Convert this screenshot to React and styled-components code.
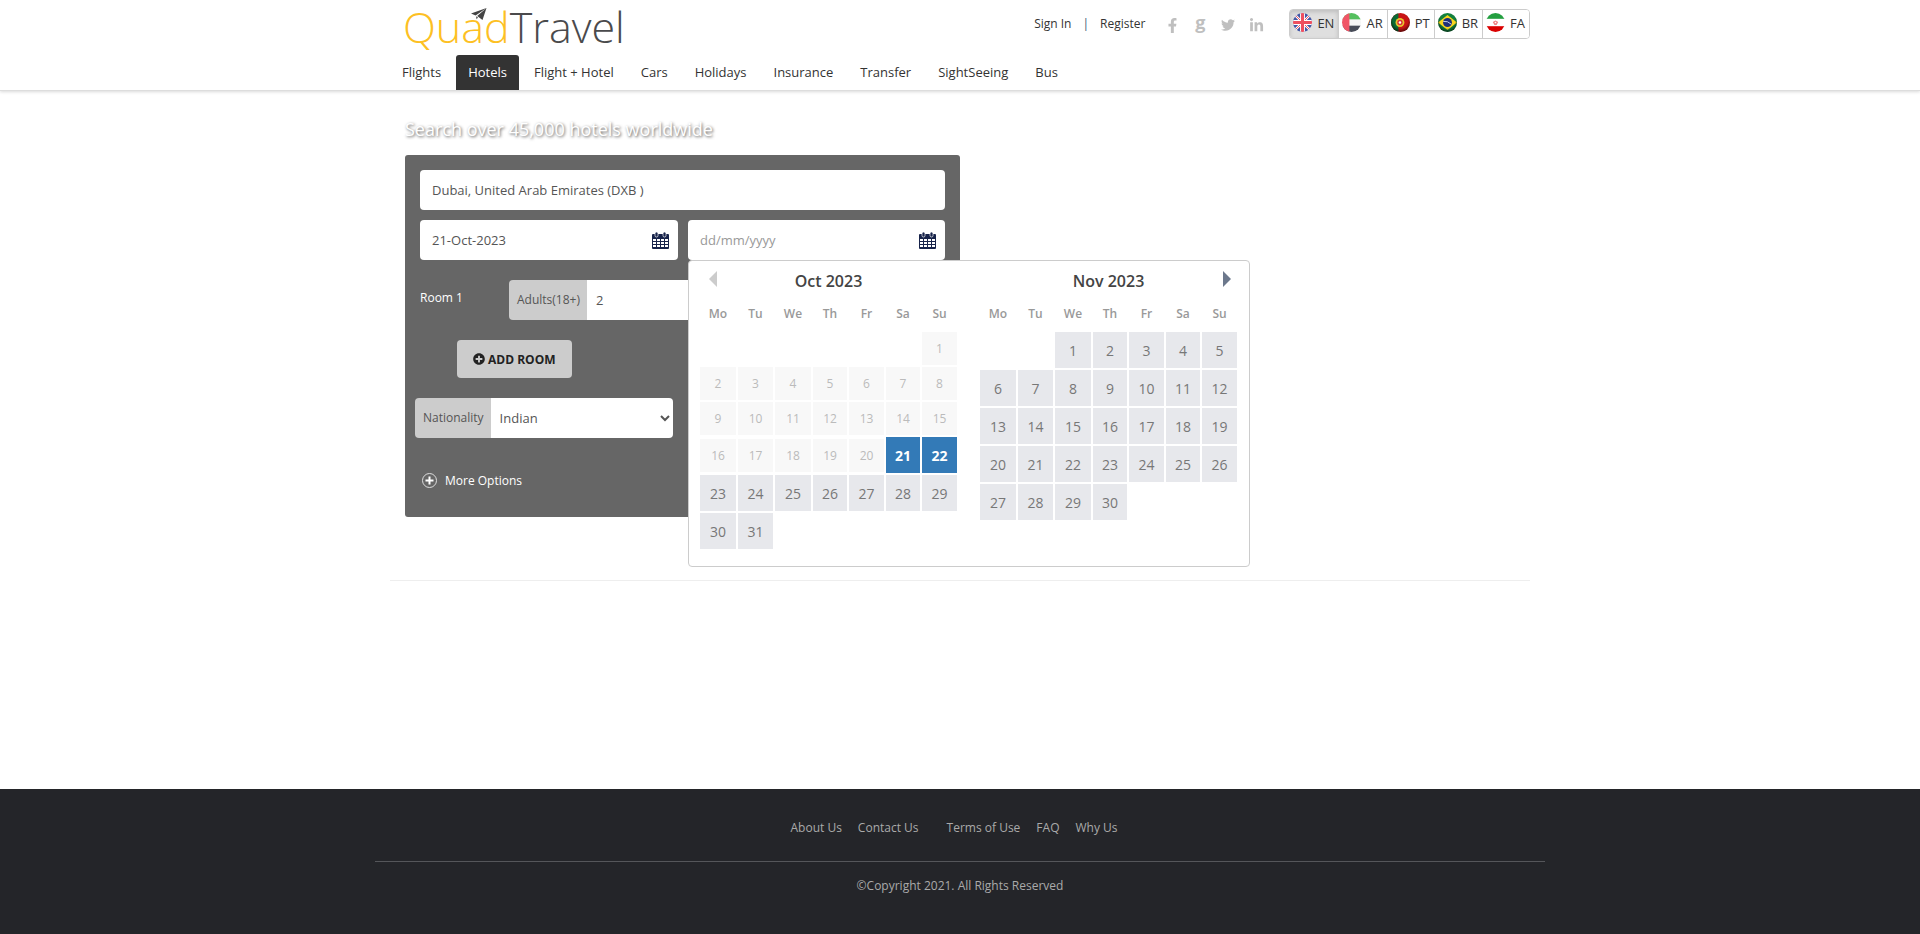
import React, { useState } from 'react';
import styled, { createGlobalStyle, css } from 'styled-components';
import { FaFacebookF, FaTwitter, FaLinkedinIn, FaPlusCircle } from 'react-icons/fa';

const GlobalStyle = createGlobalStyle`
  * { box-sizing: border-box; }
  body {
    margin: 0;
    background: #fff;
    color: #333;
    font: 12px/20px "Open Sans", sans-serif;
  }
  button, input, select { font-family: inherit; }
  a { color: inherit; text-decoration: none; }
`;

const Page = styled.div`
  min-height: 100vh;
  display: flex;
  flex-direction: column;
`;

const Container = styled.div`
  max-width: 1170px;
  margin: 0 auto;
  padding: 0 15px;
`;

/* Header */
const Header = styled.header`
  border-bottom: 1px solid #ddd;
  box-shadow: 0 1px 3px rgba(0, 0, 0, 0.15);
`;

const TopBar = styled.div`
  height: 55px;
  padding-left: 13px;
  display: flex;
  align-items: flex-start;
`;

const LogoLink = styled.a`
  position: relative;
  margin-right: auto;
  font: 300 43px/53px "Open Sans", sans-serif;
  color: #4a4a4c;
`;

const LogoAccent = styled.span`
  color: #fdc023;
`;

const LogoPlane = styled.svg`
  position: absolute;
  left: 68px;
  top: 8px;
`;

const AuthLinks = styled.div`
  display: flex;
  gap: 11px;
  padding-top: 14px;
`;

const Divider = styled.span`
  color: #3f5570;
`;

const Social = styled.div`
  display: flex;
  gap: 10px;
  padding: 16px 24px 0 18px;
  color: #bfbfbf;
`;

const SocialLink = styled.a`
  width: 18px;
  height: 18px;
  display: flex;
  align-items: center;
  justify-content: center;
`;

const SocialLetter = styled.span`
  padding-bottom: 6px;
  font-size: 18px;
  font-weight: 700;
  line-height: 18px;
`;

const LangGroup = styled.div`
  display: flex;
  margin-top: 9px;
  height: 30px;
  border: 1px solid #ccc;
  border-radius: 4px;
  overflow: hidden;
`;

const LangButton = styled.button`
  padding: 0 4px 3px 3px;
  border: 0;
  border-left: 1px solid #ccc;
  background: #fff;
  color: #333;
  font-size: 13px;
  line-height: 18px;
  display: flex;
  align-items: center;
  gap: 5px;
  &:first-child { border-left: 0; }
  ${({ $active }) => $active && css`
    background: #dfdfdf;
    box-shadow: inset 0 2px 4px rgba(0, 0, 0, 0.15);
  `}
`;

const Nav = styled.nav`
  display: flex;
  gap: 3px;
`;

const NavLink = styled.a`
  padding: 7px 12px 8px;
  font-size: 13px;
  line-height: 20px;
  border-radius: 3px 3px 0 0;
  ${({ $active }) => $active && css`
    background: #333;
    color: #fff;
  `}
`;

/* Search form */
const Main = styled.main`
  flex: 1;
`;

const SearchSection = styled.section`
  padding: 26px 15px 63px;
  border-bottom: 1px solid #eee;
`;

const Title = styled.h1`
  margin: 0 0 14px;
  font-size: 18px;
  line-height: 24px;
  font-weight: 400;
  color: #fff;
  text-shadow: 1px 1px 3px #555;
`;

const Form = styled.form`
  max-width: 555px;
  padding: 15px 15px 27px;
  border-radius: 3px;
  background: #666;
`;

const controlText = css`
  height: 40px;
  border: 0;
  background: #fff;
  color: #555;
  font-size: 13px;
`;

const TextInput = styled.input`
  ${controlText}
  display: block;
  width: 100%;
  padding: 0 12px;
  border-radius: 4px;
  &::placeholder { color: #999; opacity: 1; }
`;

const DateRow = styled.div`
  display: grid;
  grid-template-columns: 1fr 257px;
  gap: 10px;
  margin: 10px 0 20px;
`;

const DateField = styled.div`
  position: relative;
`;

const FieldIcon = styled.svg`
  position: absolute;
  right: 9px;
  top: 12px;
  pointer-events: none;
`;

const RoomRow = styled.div`
  display: flex;
  gap: 46px;
`;

const RoomLabel = styled.span`
  padding-top: 8px;
  width: 43px;
  color: #fff;
`;

const InputGroup = styled.div`
  display: flex;
  width: ${({ $width }) => $width};
`;

const Addon = styled.label`
  flex: none;
  padding: 10px 7px 10px 8px;
  border-radius: 4px 0 0 4px;
  background: #ccc;
  color: #555;
`;

const Select = styled.select`
  ${controlText}
  flex: 1;
  min-width: 0;
  padding: 0 3px 0 5px;
  border-radius: 0 4px 4px 0;
`;

const AddRoomButton = styled.button`
  display: flex;
  align-items: center;
  gap: 3px;
  height: 38px;
  margin: 20px 37px;
  padding: 0 16px;
  border: 0;
  border-radius: 4px;
  background: #ccc;
  color: #222;
  font-size: 12px;
  font-weight: 700;
`;

const Nationality = styled.div`
  margin: 0 0 32px -5px;
`;

const MoreOptions = styled.button`
  display: flex;
  align-items: center;
  gap: 7px;
  padding: 0;
  height: 20px;
  margin: 0 1px;
  border: 0;
  background: none;
  color: #fff;
  font-size: 12px;
`;

/* Date picker */
const Picker = styled.div`
  position: absolute;
  z-index: 2;
  top: 100%;
  left: 0;
  width: 562px;
  height: 307px;
  display: grid;
  grid-template-columns: 1fr 1fr;
  align-items: start;
  border: 1px solid #ccc;
  border-radius: 4px;
  background: #fff;
`;

const Month = styled.div`
  padding: 0 10px 0 9px;
`;

const MonthHeader = styled.div`
  display: grid;
  grid-template-columns: 30px 1fr 30px;
  height: 35px;
  padding-top: 10px;
`;

const MonthTitle = styled.div`
  grid-column: 2;
  color: #444;
  font-size: 16px;
  line-height: 20px;
  font-weight: 600;
  text-align: center;
`;

const MonthNav = styled.button`
  grid-row: 1;
  grid-column: ${({ $next }) => ($next ? 3 : 1)};
  justify-self: ${({ $next }) => ($next ? 'end' : 'start')};
  height: 16px;
  margin: 0 ${({ $next }) => ($next ? '8px' : '11px')};
  padding: 0;
  border: 0;
  background: none;
  color: ${({ $next }) => ($next ? '#6c788c' : '#ccc')};
  display: flex;
`;

const Days = styled.table`
  table-layout: fixed;
  width: 261px;
  border-collapse: separate;
  border-spacing: 2px;
  th {
    height: 32px;
    padding: 0;
    color: #999;
    font-weight: 600;
  }
  td { padding: 0; }
`;

const Day = styled.button`
  display: block;
  width: 100%;
  height: 36px;
  padding: 0;
  border: 0;
  background: #e7e8ec;
  color: #777;
  font-size: 14px;
  ${({ $picked }) => $picked && css`
    background: #337ab7;
    color: #fff;
    font-weight: 700;
  `}
  &:disabled {
    height: 33px;
    background: #f8f8f8;
    color: #bbb;
    font-size: 12px;
  }
`;

/* Footer */
const Footer = styled.footer`
  height: 145px;
  padding-top: 29px;
  background: #242529;
  color: #aaa;
  text-align: center;
`;

const FooterInner = styled.div`
  max-width: 1170px;
  margin: 0 auto;
`;

const FooterLinks = styled.nav`
  display: flex;
  justify-content: center;
  gap: 28px;
  padding: 0 12px 23px 0;
  border-bottom: 1px solid #55565a;
`;

const LinkSet = styled.div`
  display: flex;
  gap: 16px;
`;

const Copyright = styled.p`
  margin: 14px 0 0;
`;

function CalendarIcon() {
  return (
    <FieldIcon width="17" height="18" viewBox="0 0 17 18" aria-hidden="true">
      <path fill="#17234a" fillRule="evenodd" d="M1 2h15a1 1 0 0 1 1 1v13a1 1 0 0 1-1 1H1a1 1 0 0 1-1-1V3a1 1 0 0 1 1-1zM1 7v2h3V7zM5 7v2h3V7zM9 7v2h3V7zM13 7v2h3V7zM1 10v2h3v-2zM5 10v2h3v-2zM9 10v2h3v-2zM13 10v2h3v-2zM1 13v2h3v-2zM5 13v2h3v-2zM9 13v2h3v-2zM13 13v2h3v-2z" />
      <rect x="3" y="0" width="3" height="5" rx="1.5" fill="#17234a" stroke="#fff" strokeWidth=".7" />
      <rect x="11" y="0" width="3" height="5" rx="1.5" fill="#17234a" stroke="#fff" strokeWidth=".7" />
    </FieldIcon>
  );
}

const flagArt = {
  EN: (
    <>
      <rect width="18" height="18" fill="#4357a5" />
      <path d="M0 0l18 18M18 0L0 18" stroke="#fff" strokeWidth="2.2" />
      <path d="M0 0l18 18M18 0L0 18" stroke="#ee4f5f" strokeWidth=".9" />
      <path d="M9 0v18M0 9h18" stroke="#fff" strokeWidth="4.6" />
      <path d="M9 0v18M0 9h18" stroke="#ee4f5f" strokeWidth="2.800" />
    </>
  ),
  AR: (
    <>
      <rect width="18" height="18" fill="#f5f5f5" />
      <rect width="18" height="6" fill="#55c05f" />
      <rect y="12" width="18" height="6" fill="#474b58" />
      <rect width="7" height="18" fill="#f05566" />
    </>
  ),
  PT: (
    <>
      <rect width="18" height="18" fill="#c81414" />
      <rect width="7" height="18" fill="#0b6b35" />
      <circle cx="8.500" cy="9" r="4.200" fill="#e8c52d" />
      <circle cx="8.500" cy="9" r="2.600" fill="#d8303a" />
      <circle cx="8.500" cy="9" r="1.200" fill="#fff" />
    </>
  ),
  BR: (
    <>
      <rect width="18" height="18" fill="#12813d" />
      <path d="M9 2L18 9 9 16 0 9z" fill="#f8d51e" />
      <circle cx="9" cy="9" r="4.200" fill="#1d2f78" />
      <path d="M5 8q4-.8 7.600 2.600" stroke="#cfd8f0" strokeWidth=".9" fill="none" />
    </>
  ),
  FA: (
    <>
      <rect width="18" height="18" fill="#fff" />
      <rect width="18" height="5.500" fill="#239f40" />
      <rect y="12.500" width="18" height="5.500" fill="#da0000" />
      <path d="M9 7l2.600 1.500-1.200 2.200L9 11.500l-1.400-.8-1.200-2.200z" fill="#f08080" />
      <circle cx="9" cy="9" r=".8" fill="#fff" />
    </>
  ),
};

function Flag({ code }) {
  return (
    <svg width="19" height="19" viewBox="0 0 18 18" aria-hidden="true">
      <defs>
        <clipPath id={`flag-${code}`}><circle cx="9" cy="9" r="9" /></clipPath>
        <radialGradient id={`shade-${code}`} cx=".5" cy=".4" r=".6">
          <stop offset=".65" stopColor="#000" stopOpacity="0" />
          <stop offset="1" stopColor="#000" stopOpacity=".6" />
        </radialGradient>
      </defs>
      <g clipPath={`url(#flag-${code})`}>
        {flagArt[code]}
        {(code === 'PT' || code === 'BR') && <rect width="18" height="18" fill={`url(#shade-${code})`} />}
      </g>
    </svg>
  );
}

const weekdays = ['Mo', 'Tu', 'We', 'Th', 'Fr', 'Sa', 'Su'];
const columnWidths = [36, 35, 36, 34, 35, 34, 35];

function MonthTable({ title, offset, count, today = 0, picked = [], next }) {
  const weeks = [];
  for (let start = 1 - offset; start <= count; start += 7) {
    weeks.push(weekdays.map((_, i) => start + i));
  }
  return (
    <Month>
      <MonthHeader>
        <MonthTitle>{title}</MonthTitle>
        <MonthNav type="button" $next={next} aria-label={next ? 'Next month' : 'Previous month'}>
          <svg width="8" height="16" viewBox="0 0 8 16" aria-hidden="true">
            <path d={next ? 'M0 0l8 8-8 8z' : 'M8 0L0 8l8 8z'} fill="currentColor" />
          </svg>
        </MonthNav>
      </MonthHeader>
      <Days>
        <colgroup>{columnWidths.map((w, i) => <col key={i} width={w} />)}</colgroup>
        <thead><tr>{weekdays.map((d) => <th key={d} scope="col">{d}</th>)}</tr></thead>
        <tbody>
          {weeks.map((week) => (
            <tr key={week[0]}>
              {week.map((d) => (
                <td key={d}>
                  {d > 0 && d <= count && (
                    <Day type="button" disabled={d < today} $picked={picked.includes(d)}>{d}</Day>
                  )}
                </td>
              ))}
            </tr>
          ))}
        </tbody>
      </Days>
    </Month>
  );
}

const sections = ['Flights', 'Hotels', 'Flight + Hotel', 'Cars', 'Holidays', 'Insurance', 'Transfer', 'SightSeeing', 'Bus'];

export default function App() {
  const [lang, setLang] = useState('EN');
  return (
    <Page>
      <GlobalStyle />
      <Header>
        <Container>
          <TopBar>
            <LogoLink href="#">
              <LogoAccent>Quad</LogoAccent>Travel
              <LogoPlane width="16" height="12" viewBox="0 0 16 12" aria-hidden="true">
                <path d="M15.500 0L0 5.500l4.600 2zM15.500 0L6.200 8l5.300 4zM5 8.200l.6 3 1.400-1.700z" fill="#444" />
              </LogoPlane>
            </LogoLink>
            <AuthLinks>
              <a href="#">Sign In</a>
              <Divider>|</Divider>
              <a href="#">Register</a>
            </AuthLinks>
            <Social>
              <SocialLink href="#" aria-label="Facebook"><FaFacebookF size={15} /></SocialLink>
              <SocialLink href="#" aria-label="Google"><SocialLetter>g</SocialLetter></SocialLink>
              <SocialLink href="#" aria-label="Twitter"><FaTwitter size={14} /></SocialLink>
              <SocialLink href="#" aria-label="LinkedIn"><FaLinkedinIn size={15} /></SocialLink>
            </Social>
            <LangGroup role="group" aria-label="Language">
              {Object.keys(flagArt).map((code) => (
                <LangButton key={code} type="button" $active={code === lang} aria-pressed={code === lang} onClick={() => setLang(code)}>
                  <Flag code={code} />{code}
                </LangButton>
              ))}
            </LangGroup>
          </TopBar>
          <Nav>
            {sections.map((s) => <NavLink key={s} href="#" $active={s === 'Hotels'}>{s}</NavLink>)}
          </Nav>
        </Container>
      </Header>

      <Main>
        <Container>
          <SearchSection>
            <Title>Search over 45,000 hotels worldwide</Title>
            <Form>
              <TextInput aria-label="Destination" defaultValue="Dubai, United Arab Emirates (DXB )" />
              <DateRow>
                <DateField>
                  <TextInput aria-label="Check-in" defaultValue="21-Oct-2023" />
                  <CalendarIcon />
                </DateField>
                <DateField>
                  <TextInput aria-label="Check-out" placeholder="dd/mm/yyyy" />
                  <CalendarIcon />
                  <Picker>
                    <MonthTable title="Oct 2023" offset={6} count={31} today={21} picked={[21, 22]} />
                    <MonthTable title="Nov 2023" offset={2} count={30} next />
                  </Picker>
                </DateField>
              </DateRow>
              <RoomRow>
                <RoomLabel>Room 1</RoomLabel>
                <InputGroup $width="200px">
                  <Addon htmlFor="adults">Adults(18+)</Addon>
                  <Select id="adults" defaultValue="2">
                    <option>1</option>
                    <option>2</option>
                    <option>3</option>
                  </Select>
                </InputGroup>
              </RoomRow>
              <AddRoomButton type="button"><FaPlusCircle size={12} />ADD ROOM</AddRoomButton>
              <Nationality>
                <InputGroup $width="258px">
                  <Addon htmlFor="nationality">Nationality</Addon>
                  <Select id="nationality"><option>Indian</option></Select>
                </InputGroup>
              </Nationality>
              <MoreOptions type="button">
                <svg width="17" height="17" viewBox="0 0 17 17" fill="none" stroke="#fff" aria-hidden="true">
                  <circle cx="8.500" cy="8.500" r="7" stroke="#ddd" />
                  <path d="M8.500 4.500v8M4.500 8.500h8" strokeWidth="2" />
                </svg>
                More Options
              </MoreOptions>
            </Form>
          </SearchSection>
        </Container>
      </Main>

      <Footer>
        <FooterInner>
          <FooterLinks>
            <LinkSet>
              <a href="#">About Us</a>
              <a href="#">Contact Us</a>
            </LinkSet>
            <LinkSet>
              <a href="#">Terms of Use</a>
              <a href="#">FAQ</a>
              <a href="#">Why Us</a>
            </LinkSet>
          </FooterLinks>
          <Copyright>©Copyright 2021. All Rights Reserved</Copyright>
        </FooterInner>
      </Footer>
    </Page>
  );
}
